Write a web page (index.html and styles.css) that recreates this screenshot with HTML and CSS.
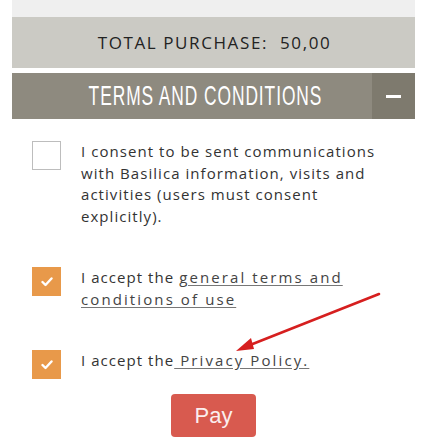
FILE: index.html
```html
<!DOCTYPE html>
<html lang="en">
<head>
    <meta charset="UTF-8">
    <meta name="viewport" content="width=device-width, initial-scale=1.0">
    <title>Checkout - Terms</title>
    <link rel="stylesheet" href="styles.css">
</head>
<body>

<div class="container">
    <div class="top-strip"></div>

    <div class="total">TOTAL PURCHASE:&nbsp; 50,00</div>

    <div class="terms-bar">
        <h2 class="terms-title"><span>TERMS AND CONDITIONS</span></h2>
        <span class="toggle"><span class="minus"></span></span>
    </div>

    <div class="options">
        <label class="option">
            <span class="box"></span>
            <span class="text">I consent to be sent communications with Basilica information, visits and activities (users must consent explicitly).</span>
        </label>

        <label class="option">
            <span class="box checked">
                <svg width="12" height="10" viewBox="0 0 12 10"><polyline points="1.5,5 4.5,8 10.5,1.5" fill="none" stroke="#fff" stroke-width="2.4" stroke-linecap="round" stroke-linejoin="round"/></svg>
            </span>
            <span class="text">I accept the <a href="#">general terms and conditions of use</a></span>
        </label>

        <label class="option">
            <span class="box checked">
                <svg width="12" height="10" viewBox="0 0 12 10"><polyline points="1.5,5 4.5,8 10.5,1.5" fill="none" stroke="#fff" stroke-width="2.4" stroke-linecap="round" stroke-linejoin="round"/></svg>
            </span>
            <span class="text">I accept the<a href="#"> Privacy Policy.</a></span>
        </label>
    </div>

    <div class="pay-row">
        <button class="pay-button">Pay</button>
    </div>

    <!-- annotation arrow drawn over the page -->
    <svg class="arrow" width="150" height="64" viewBox="0 0 150 64">
        <line x1="146" y1="3" x2="12" y2="56" stroke="#d61f1f" stroke-width="2.6" stroke-linecap="round"/>
        <polygon points="3,60 18,47 21,58" fill="#d61f1f"/>
    </svg>
</div>

</body>
</html>
```

FILE: styles.css
```css
body {
    margin: 0;
    background-color: #fff;
    font-family: "Open Sans", sans-serif;
    color: #333;
}
.container {
    position: relative;
    width: 403px;
    margin-left: 12px;
    height: 445px;
}
.top-strip {
    height: 17px;
    background-color: #efefef;
}
.total {
    height: 51px;
    background-color: #cbcac4;
    color: #222;
    font-size: 17px;
    letter-spacing: 1.6px;
    display: flex;
    align-items: center;
    justify-content: center;
    padding-left: 2px;
}
.terms-bar {
    display: flex;
    margin-top: 5px;
    height: 46px;
    background-color: #8e8a7f;
}
.terms-title {
    flex: 1;
    margin: 0;
    padding-left: 26px;
    display: flex;
    justify-content: center;
    align-items: center;
    color: #fff;
    font-family: "Liberation Sans", sans-serif;
    font-weight: normal;
    font-size: 28px;
    line-height: 46px;
    white-space: nowrap;
    overflow: hidden;
}
.terms-title span {
    display: inline-block;
    letter-spacing: 1.5px;
    transform: scaleX(0.62);
}
.toggle {
    width: 43px;
    background-color: #7e7a6e;
    display: flex;
    align-items: center;
    justify-content: center;
}
.toggle .minus {
    width: 15px;
    height: 3px;
    background-color: #fff;
}
.options {
    padding: 22px 0 0 20px;
}
.option {
    display: flex;
    align-items: flex-start;
    margin-bottom: 40px;
}
.option:last-child {
    margin-bottom: 0;
}
.box {
    flex: none;
    width: 27px;
    height: 27px;
    border: 1px solid #bdbdbd;
    margin-right: 20px;
    display: flex;
    align-items: center;
    justify-content: center;
}
.box.checked {
    background-color: #e8994a;
    border-color: #e8994a;
}
.text {
    flex: 1;
    padding-right: 28px;
    font-size: 15px;
    line-height: 21.5px;
    letter-spacing: 1.05px;
    color: #333;
}
.text a {
    color: #444;
    text-decoration: underline;
    text-decoration-color: #777;
    text-underline-offset: 2px;
    letter-spacing: 2.1px;
}
.pay-row {
    display: flex;
    justify-content: center;
    margin-top: 15px;
}
.pay-button {
    width: 85px;
    height: 43px;
    background-color: #d85a4f;
    color: #fbeeee;
    border: none;
    border-radius: 4px;
    font-family: "Liberation Sans", Arial, sans-serif;
    font-size: 22px;
}
.arrow {
    position: absolute;
    left: 221px;
    top: 291px;
}
```
